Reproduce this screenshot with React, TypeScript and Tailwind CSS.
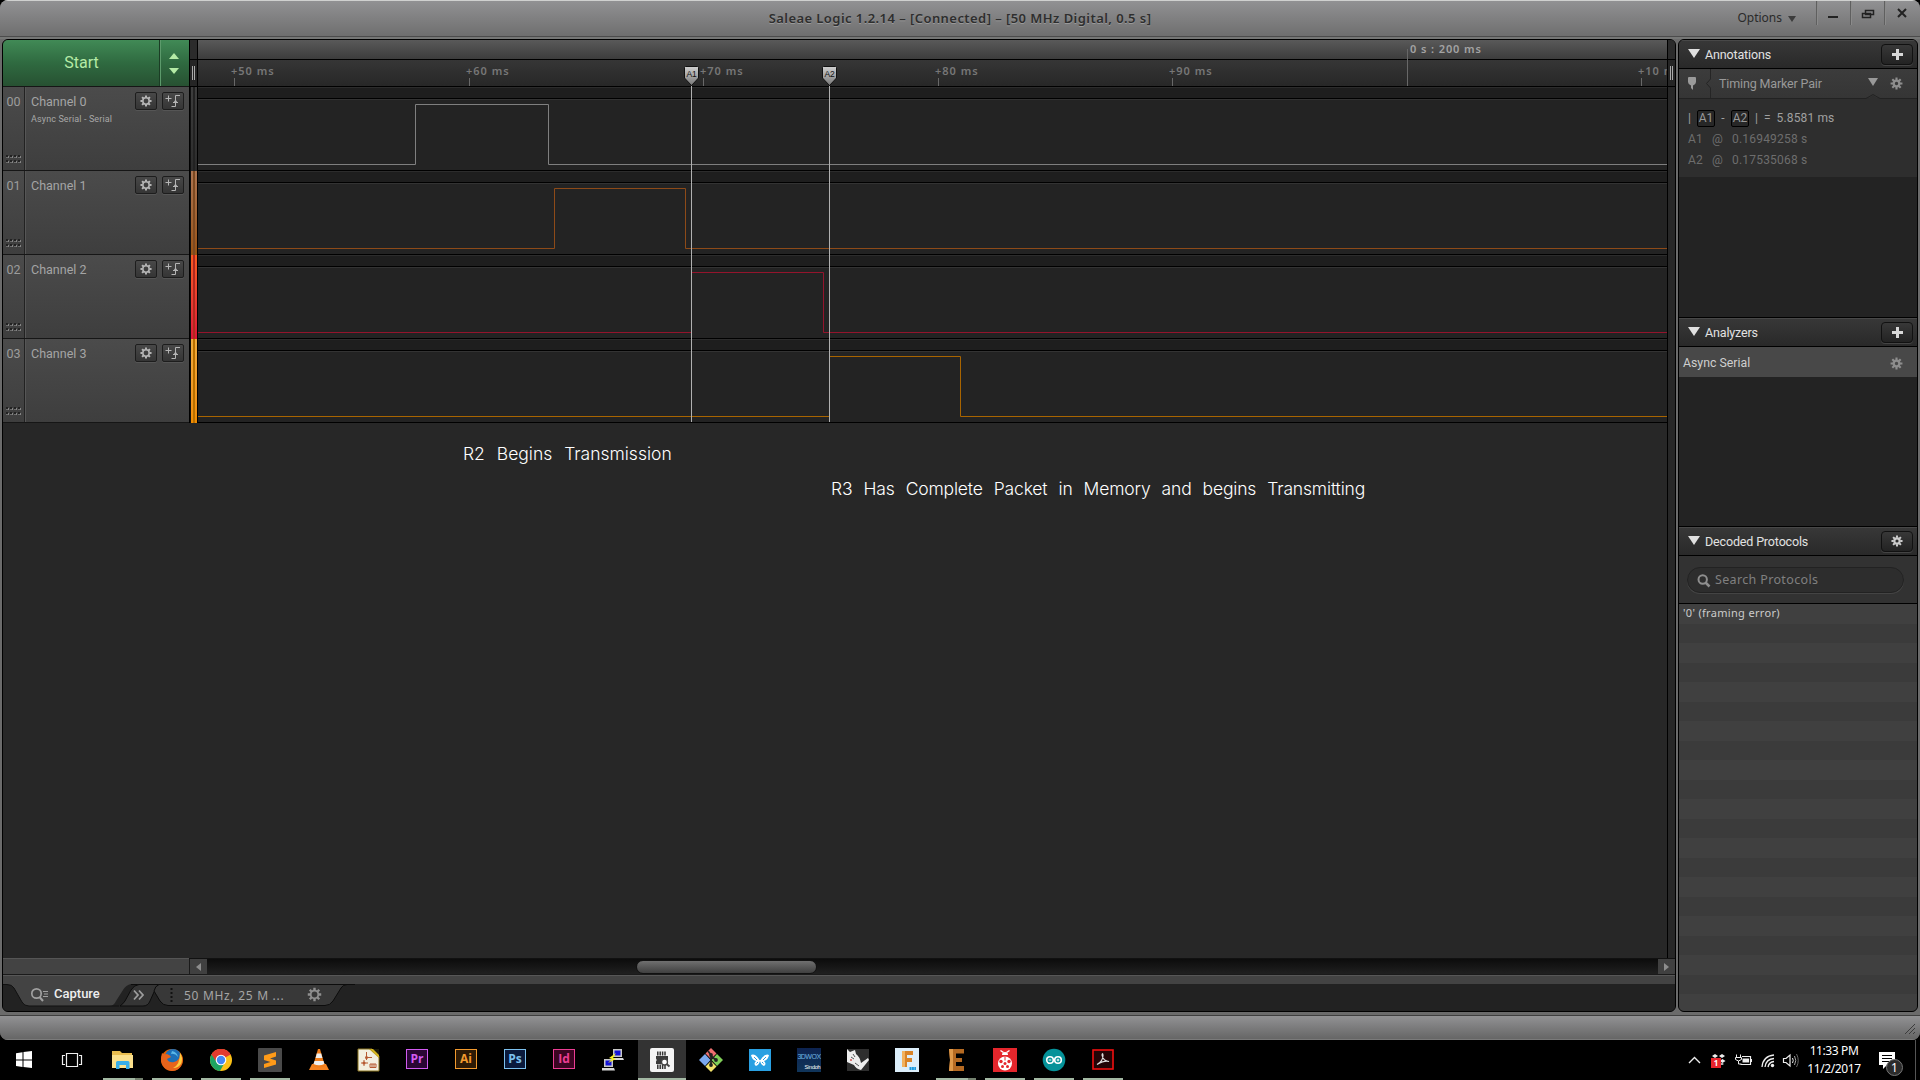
import React from "react";

const GEAR =
  "M12 2.5v4M12 17.5v4M2.5 12h4M17.5 12h4M5.3 5.3l2.8 2.8M15.9 15.9l2.8 2.8M5.3 18.7l2.8-2.8M15.9 8.1l2.8-2.8";

function Gear({ size = 16, color = "#b5b5b5", r = 5.4, w = 2.6 }: { size?: number; color?: string; r?: number; w?: number }) {
  return (
    <svg width={size} height={size} viewBox="0 0 24 24" fill="none" stroke={color} className="shrink-0">
      <circle cx="12" cy="12" r={r} strokeWidth={w} />
      <path d={GEAR} strokeWidth="3.4" />
    </svg>
  );
}

function Triangle({ className, points, w, h, color }: { className?: string; points: string; w: number; h: number; color: string }) {
  return (
    <svg width={w} height={h} viewBox={`0 0 ${w} ${h}`} className={`shrink-0 ${className ?? ""}`}>
      <polygon points={points} fill={color} />
    </svg>
  );
}

/* ---------- title bar ---------- */

function TitleBar() {
  return (
    <header className="relative flex h-[39px] shrink-0 items-start justify-end border-t border-[#cfd0cf] bg-linear-to-b from-[#919193] to-[#6c6c6c] pr-[2px]">
      <div className="absolute inset-x-0 bottom-0 h-[3px] border-t border-[#4c4c4c] bg-[#767776]" />
      <div className="absolute inset-x-0 top-[7px] text-center font-['Noto_Sans'] text-[13px] leading-[20px] font-semibold tracking-[0.44px] whitespace-pre text-[#2e2e2e] [text-shadow:0_1px_0_#9a9a9a]">
        Saleae Logic 1.2.14 – [Connected] – [50 MHz Digital, 0.5 s]
      </div>
      <div className="flex items-center gap-[6px] pt-[7px] pr-[20px] font-['Noto_Sans'] text-[12px] leading-[20px] text-[#2a2a2a]">
        Options
        <Triangle w={8} h={6} points="0,0 8,0 4,6" color="#3c3c3c" className="mt-[2px]" />
      </div>
      {[0, 1, 2].map((i) => (
        <div key={i} className="flex h-[24px] w-[34px] items-start justify-center border-l border-[#5f5f5f] pt-[6px] shadow-[inset_1px_0_0_#8b8b8b]">
          <svg width="14" height="14" viewBox="0 0 14 14" fill="none" stroke="#222">
            {i === 0 && <path d="M1 10h10" strokeWidth="2" />}
            {i === 1 && <path d="M4.5 3.5h8v4h-8zM1.5 6.5h8v4h-8z" strokeWidth="1.5" />}
            {i === 2 && <path d="M3 2l8 8M11 2l-8 8" strokeWidth="2" />}
          </svg>
        </div>
      ))}
    </header>
  );
}

/* ---------- channels ---------- */

type Channel = {
  id: string;
  name: string;
  sub?: string;
  strip: string;
  stripDark: string;
  wave: string;
  rise: number;
  fall: number;
};

const CHANNELS: Channel[] = [
  { id: "00", name: "Channel 0", sub: "Async Serial - Serial", strip: "bg-linear-to-b from-[#3e3e3e] to-[#2c2c2c]", stripDark: "bg-[#222]", wave: "#7f7f7f", rise: 415, fall: 548 },
  { id: "01", name: "Channel 1", strip: "bg-linear-to-b from-[#ad7550] to-[#9a5412]", stripDark: "bg-[#7d4a22]", wave: "#8d4a18", rise: 554, fall: 685 },
  { id: "02", name: "Channel 2", strip: "bg-linear-to-b from-[#fb5a20] to-[#dc1436]", stripDark: "bg-[#b02a20]", wave: "#94142c", rise: 691, fall: 823 },
  { id: "03", name: "Channel 3", strip: "bg-linear-to-b from-[#f0ab3c] to-[#f28c00]", stripDark: "bg-[#b97000]", wave: "#a86400", rise: 829, fall: 960 },
];

function Grip() {
  const dots = [];
  for (let x = 0; x < 4; x++) {
    dots.push(<rect key={`a${x}`} x={x * 4} y={0} width="2" height="2" fill="#222" />);
    dots.push(<rect key={`b${x}`} x={x * 4 + 2} y={1} width="1" height="2" fill="#858585" />);
    dots.push(<rect key={`c${x}`} x={x * 4} y={5} width="2" height="2" fill="#222" />);
    dots.push(<rect key={`d${x}`} x={x * 4 + 2} y={6} width="1" height="2" fill="#858585" />);
    dots.push(<rect key={`e${x}`} x={x * 4} y={2} width="2" height="1" fill="#6c6c6c" />);
    dots.push(<rect key={`f${x}`} x={x * 4} y={7} width="2" height="1" fill="#6c6c6c" />);
  }
  return (
    <svg width="16" height="8" viewBox="0 0 16 8">
      {dots}
    </svg>
  );
}

function SmallButton({ children }: { children: React.ReactNode }) {
  return (
    <div className="flex h-[18px] w-[22px] items-center justify-center rounded-[2px] border border-[#1d1d1d] bg-linear-to-b from-[#484848] to-[#353535] shadow-[0_1px_0_#555]">
      {children}
    </div>
  );
}

function ChannelHeader({ c }: { c: Channel }) {
  return (
    <div className="flex h-[84px] border-b border-[#161616] bg-linear-to-b from-[#4b4b4b] to-[#3e3e3e]">
      <div className="flex w-[22px] flex-col items-center justify-between border-r border-[#222] pt-[6px] pb-[7px] font-[Roboto] text-[12.5px] leading-[18px] text-[#9c9c9c]">
        <span>{c.id}</span>
        <Grip />
      </div>
      <div className="flex flex-1 justify-between border-l border-[#565656] pt-[5px] pr-[5px] pl-[5px] font-[Roboto]">
        <div className="flex flex-col">
          <span className="mt-px text-[12.5px] leading-[18px] text-[#a5a5a5]">{c.name}</span>
          {c.sub && <span className="text-[9px] leading-[16px] tracking-[0.12px] text-[#a8a8a8]">{c.sub}</span>}
        </div>
        <div className="flex gap-[5px]">
          <SmallButton>
            <Gear size={14} />
          </SmallButton>
          <SmallButton>
            <svg width="16" height="14" viewBox="0 0 16 14" fill="none" stroke="#b5b5b5">
              <path d="M0.500 4.500h6M3.500 1.500v6M15 1.500h-4.500v11M6.500 12.500h4M8 8.500h5" />
              <path d="M8.500 8.500h4l-2-3z" fill="#b5b5b5" stroke="none" />
            </svg>
          </SmallButton>
        </div>
      </div>
    </div>
  );
}

function Lane({ c }: { c: Channel }) {
  const r = c.rise - 198 + 0.5;
  const f = c.fall - 198 + 0.5;
  return (
    <div className="h-[84px] bg-[#232323]">
      <div className="h-[12px] border-t border-b border-t-[#2c2c2c] border-b-black bg-[#1e1e1e]" />
      <div className="h-px bg-[#333]" />
      <svg width="1469" height="70" viewBox="0 0 1469 70" fill="none" className="block">
        <path d={`M0 64.500H${r}V4.500H${f}V64.500H1469`} stroke={c.wave} />
      </svg>
      <div className="h-px bg-black" />
    </div>
  );
}

/* ---------- ruler ---------- */

const TICKS = [
  { x: 36, label: "+50 ms" },
  { x: 271, label: "+60 ms" },
  { x: 505, label: "+70 ms" },
  { x: 740, label: "+80 ms" },
  { x: 974, label: "+90 ms" },
  { x: 1443, label: "+10 ms" },
];

function Ruler() {
  return (
    <div className="relative h-[47px] shrink-0 overflow-hidden border-b border-black font-['Noto_Sans'] text-[11px] font-semibold tracking-[1px] whitespace-nowrap">
      <div className="h-[20px] border-b border-black bg-linear-to-b from-[#595959] to-[#3d3d3d]" />
      <div className="h-[26px] bg-linear-to-b from-[#363636] to-[#272727]" />
      <div className="absolute top-[9px] left-[1209px] h-[37px] border-l border-[#686868]" />
      <div className="absolute -top-px left-[1212px] leading-[19px] tracking-[0.9px] text-[#a3a3a3]">0 s : 200 ms</div>
      {TICKS.map((t) => (
        <div key={t.x} className="absolute top-[38px] h-[8px] border-l border-[#686868]" style={{ left: t.x }}>
          <div className="absolute -top-[16px] -left-[4px] leading-[18px] text-[#777]">{t.label}</div>
        </div>
      ))}
    </div>
  );
}

function Marker({ x, label }: { x: number; label: string }) {
  return (
    <div className="absolute top-[26px] flex w-[17px] flex-col items-center" style={{ left: x - 8 }}>
      <div className="relative h-[20px]">
        <svg width="17" height="20" viewBox="0 0 17 20" className="block">
          <defs>
            <linearGradient id="mk" x1="0" y1="0" x2="0" y2="1">
              <stop offset="0" stopColor="#d0d0d0" />
              <stop offset="1" stopColor="#777" />
            </linearGradient>
          </defs>
          <path d="M1.500 1.500Q1.500 .5 2.500 .5H14.500Q15.500 .5 15.500 1.500V12L8.500 19.500L1.500 12Z" fill="url(#mk)" stroke="#111" />
        </svg>
        <span className="absolute inset-x-0 top-[2px] text-center font-['Liberation_Sans'] text-[8.5px] leading-[12px] tracking-[-0.3px] text-[#111]">{label}</span>
      </div>
      <div className="h-[336px] w-px bg-[#b0b0b0]" />
    </div>
  );
}

/* ---------- bottom bar of capture panel ---------- */

function CaptureTabs() {
  return (
    <div className="relative h-[27px] shrink-0 bg-[#222]">
      <svg width="360" height="27" viewBox="0 0 360 27" className="block" fill="none">
        <path d="M128 .5H352" stroke="#0c0c0c" />
        <path d="M0 0H128Q123 1 120 6L113 17Q111 22 106 22H26Q21 22 19 18L11 4Q9 .5 4 .5H0Z" fill="#434343" />
        <path d="M0 .5H4Q9 .5 11 4L19 18Q21 22 26 22H116" stroke="#111" />
        <path d="M117 22Q120 20 122 17L128 6Q131 1 136 .5H156L151 8L147 17Q145 22 140 22Z" fill="#353535" stroke="#0c0c0c" />
        <path d="M156 .5Q152 2 151 7L157 17Q160 21.500 165 21.500H322Q327 21.500 330 17L338 4Q340 .5 344 .5Z" fill="#383838" stroke="#0c0c0c" />
        <circle cx="33.500" cy="9.500" r="4.700" stroke="#a0a0a0" strokeWidth="1.700" />
        <path d="M36.500 13L40 17" stroke="#a0a0a0" strokeWidth="2" />
        <path d="M40 7.500h5M41 10h4M40 12.500h5" stroke="#a0a0a0" />
        <path d="M131 6.500l4 4.500l-4 4.500M136 6.500l4 4.500l-4 4.500" stroke="#9c9c9c" strokeWidth="1.800" />
        <path d="M168.500 4v15" stroke="#111" strokeWidth="2" strokeDasharray="2 2" />
      </svg>
      <span className="absolute top-0 left-[51px] font-[Roboto] text-[13px] leading-[20px] font-medium text-[#eee]">Capture</span>
      <span className="absolute top-[2px] left-[181px] font-['Noto_Sans'] text-[12px] leading-[19px] tracking-[0.7px] whitespace-nowrap text-[#a5a5a5]">50 MHz, 25 M ...</span>
      <span className="absolute top-[2px] left-[303px]">
        <Gear size={17} color="#909090" />
      </span>
    </div>
  );
}

/* ---------- capture panel ---------- */

function Splitter() {
  return (
    <div className="flex h-[47px] flex-col border-b border-black bg-[#252525]">
      <div className="h-[20px] border-b border-black bg-[#2b2b2b]" />
      <div className="flex flex-1 items-center justify-center gap-px pb-px">
        <span className="h-[14px] w-px bg-[#aaa]" />
        <span className="h-[14px] w-px bg-[#aaa]" />
      </div>
    </div>
  );
}

function CapturePanel() {
  return (
    <section className="flex h-[973px] w-[1674px] flex-col overflow-hidden rounded-md border border-black bg-[#272727]">
      <div className="flex min-h-0 flex-1">
        <div className="flex w-[186px] flex-col">
          <div className="flex h-[47px] border-b border-[#161616] bg-linear-to-b from-[#418a56] via-[#2f6a40] to-[#275132] text-[#b4eba6]">
            <div className="flex flex-1 items-center justify-center border-r border-[#1b3d25] pb-px pl-px font-[Roboto] text-[16px]">Start</div>
            <div className="flex w-[29px] flex-col items-center justify-center gap-[9px] border-l border-[#5c9a6b] pr-[2px]">
              <Triangle w={10} h={6} points="5,0 10,6 0,6" color="#b4eba6" />
              <Triangle w={10} h={6} points="0,0 10,0 5,6" color="#b4eba6" />
            </div>
          </div>
          {CHANNELS.map((c) => (
            <ChannelHeader key={c.id} c={c} />
          ))}
          <div className="flex-1" />
          <div className="h-[16px] border-t border-[#555] bg-[#434343]" />
        </div>
        <div className="flex min-w-0 flex-1 flex-col">
          <div className="flex min-h-0 flex-1">
            <div className="flex w-[9px] flex-col">
              <div className="border-x border-black">
                <Splitter />
              </div>
              {CHANNELS.map((c) => (
                <div key={c.id} className="flex h-[84px] border-x border-black bg-[#111] pl-px">
                  <div className={`w-[2px] ${c.strip}`} />
                  <div className={`w-[2px] ${c.stripDark}`} />
                  <div className={`w-[2px] ${c.strip}`} />
                </div>
              ))}
            </div>
            <div className="relative w-[1469px]">
              <Ruler />
              {CHANNELS.map((c) => (
                <Lane key={c.id} c={c} />
              ))}
              <Marker x={493} label="A1" />
              <Marker x={631} label="A2" />
              <div className="absolute top-[402px] left-[265px] font-['Inter',sans-serif] text-[17.5px] leading-[24px] font-light [word-spacing:7px] whitespace-nowrap text-white">
                R2 Begins Transmission
              </div>
              <div className="absolute top-[437px] left-[633px] font-['Inter',sans-serif] text-[17.5px] leading-[24px] font-light tracking-[-0.16px] [word-spacing:6.3px] whitespace-nowrap text-white">
                R3 Has Complete Packet in Memory and begins Transmitting
              </div>
            </div>
            <div className="w-[8px] border-l border-black bg-[#272727]">
              <Splitter />
            </div>
          </div>
          <div className="flex h-[16px] border-t border-[#111] bg-linear-to-b from-[#0c0c0c] to-[#202020]">
            <div className="flex w-[18px] items-center justify-center border-l border-[#1a1a1a] bg-[#404040] pr-px">
              <Triangle w={5} h={8} points="5,0 5,8 0,4" color="#8d8d8d" />
            </div>
            <div className="flex flex-1 items-center pl-[429px]">
              <div className="h-[14px] w-[181px] rounded-full border border-[#111] bg-linear-to-b from-[#707070] to-[#404040]" />
            </div>
            <div className="flex w-[17px] items-center justify-center bg-[#404040]">
              <Triangle w={5} h={8} points="0,0 5,4 0,8" color="#8d8d8d" />
            </div>
          </div>
        </div>
      </div>
      <div className="h-[10px] shrink-0 border-t border-[#1a1a1a] bg-[#434343] shadow-[inset_0_1px_0_#575757]" />
      <CaptureTabs />
    </section>
  );
}

/* ---------- side panel ---------- */

function SectionHeader({ title, icon }: { title: string; icon: "plus" | "gear" }) {
  return (
    <div className="flex h-[29px] shrink-0 items-center border-b border-black bg-linear-to-b from-[#383838] to-[#292929] pr-[4px] pl-[9px] shadow-[inset_0_1px_0_#484848]">
      <Triangle w={12} h={9} points="0,0 12,0 6,9" color="#e0e0e0" className="-mt-px" />
      <span className="ml-[5px] flex-1 pt-px font-[Roboto] text-[12.500px] leading-[20px] tracking-[-0.15px] text-[#e2e2e2]">{title}</span>
      <div className="flex h-[21px] w-[32px] items-center justify-center rounded-[4px] border border-[#111] bg-linear-to-b from-[#383838] to-[#232323] shadow-[0_1px_0_#444]">
        {icon === "plus" ? (
          <svg width="11" height="11" viewBox="0 0 11 11" stroke="#d8d8d8" strokeWidth="3">
            <path d="M5.500 0v11M0 5.500h11" />
          </svg>
        ) : (
          <Gear size={14} color="#ccc" r={4.5} w={3.6} />
        )}
      </div>
    </div>
  );
}

function Key({ children }: { children: string }) {
  return <span className="flex h-[17px] w-[18px] items-center justify-center rounded-[2px] border border-black bg-[#272727] text-[#999]">{children}</span>;
}

function SidePanel() {
  return (
    <aside className="flex h-[973px] w-[240px] flex-col overflow-hidden rounded-md border border-black bg-[#232323] font-[Roboto] text-[12px]">
      <SectionHeader title="Annotations" icon="plus" />
      <div className="flex h-[29px] shrink-0 items-stretch bg-linear-to-b from-[#3c3c3c] to-[#353535]">
        <div className="flex w-[31px] items-center pl-[9px]">
          <svg width="8" height="13" viewBox="0 0 8 13">
            <path d="M0 1Q0 0 1 0H7Q8 0 8 1V5Q8 7 5 8.500V13L3 11V8.500Q0 7 0 5Z" fill="#9a9a9a" />
          </svg>
        </div>
        <svg width="8" height="29" viewBox="0 0 8 29" fill="none" stroke="#252525" className="-ml-[4px]">
          <path d="M4.500 0V10L.5 14.500L4.500 19V29" />
        </svg>
        <span className="ml-[5px] flex-1 text-[12.5px] leading-[29px] tracking-[-0.15px] text-[#999]">Timing Marker Pair</span>
        <div className="flex items-center gap-[11px] pr-[13px]">
          <Triangle w={10} h={8} points="0,0 10,0 5,8" color="#999" className="-mt-[3px]" />
          <Gear size={15} color="#8e8e8e" r={4.5} w={3.6} />
        </div>
      </div>
      <div className="flex h-[79px] shrink-0 flex-col bg-[#2e2e2e] pl-[9px]">
        <svg width="238" height="5" viewBox="0 0 238 5" fill="none" className="-mt-[4px] -ml-[9px] block shrink-0">
          <path d="M0 4.500H187L194 .5L201 4.500H238" stroke="#222" />
          <path d="M188 5L194 1.500L200 5Z" fill="#2e2e2e" />
        </svg>
        <div className="mt-[10px] flex h-[18px] items-center text-[12px] text-[#a0a0a0]">
          <span className="w-[9px]">|</span>
          <Key>A1</Key>
          <span className="w-[16px] text-center">-</span>
          <Key>A2</Key>
          <span className="ml-[6px]">|</span>
          <span className="ml-[6px]">=</span>
          <span className="ml-[6px] text-[12px] tracking-[0.15px]">5.8581 ms</span>
        </div>
        <div className="mt-[3px] flex h-[18px] items-center text-[12px] tracking-[0.2px] text-[#6d6d6d]">
          <span className="w-[24px]">A1</span>
          <span className="w-[20px]">@</span>0.16949258 s
        </div>
        <div className="mt-[3px] flex h-[18px] items-center text-[12px] tracking-[0.2px] text-[#6d6d6d]">
          <span className="w-[24px]">A2</span>
          <span className="w-[20px]">@</span>0.17535068 s
        </div>
      </div>
      <div className="h-[141px] shrink-0 border-b border-black" />
      <SectionHeader title="Analyzers" icon="plus" />
      <div className="flex h-[30px] shrink-0 items-center justify-between bg-[#484848] pt-[3px] pr-[13px] pl-[4px] text-[12.3px] text-[#cfcfcf]">
        Async Serial
        <Gear size={15} color="#8e8e8e" r={4.5} w={3.6} />
      </div>
      <div className="h-[150px] shrink-0 border-b border-black" />
      <SectionHeader title="Decoded Protocols" icon="gear" />
      <div className="flex h-[47px] shrink-0 items-center bg-[#323232] pr-[13px] pl-[8px]">
        <div className="flex h-[26px] flex-1 items-center rounded-full border border-[#222] bg-[#2d2d2d] pt-[2px] pl-[9px] font-['Noto_Sans'] text-[12.5px] tracking-[0.35px] text-[#808080] shadow-[0_1px_0_#444]">
          <svg width="14" height="14" viewBox="0 0 14 14" fill="none" stroke="#8e8e8e" className="mr-[4px]">
            <circle cx="5.700" cy="5.500" r="4.200" strokeWidth="2" />
            <path d="M8.500 8.500L12.500 12.500" strokeWidth="2.500" />
          </svg>
          Search Protocols
        </div>
      </div>
      <div className="flex-1 overflow-hidden border-t border-black">
        {Array.from({ length: 21 }, (_, i) => (
          <div key={i} className={`h-[19.5px] pl-[4px] font-['Noto_Sans'] text-[11px] leading-[17px] tracking-[0.32px] text-[#ccc] ${i % 2 ? "bg-[#3b3b3b]" : "bg-[#404040]"}`}>
            {i === 0 ? "'0' (framing error)" : ""}
          </div>
        ))}
      </div>
    </aside>
  );
}

/* ---------- taskbar ---------- */

function Adobe({ t, c, bg }: { t: string; c: string; bg: string }) {
  return (
    <span className="-mt-[3px] flex h-[20px] w-[22px] items-center justify-center border font-['Open_Sans'] text-[12px] leading-none font-bold" style={{ color: c, borderColor: c, background: bg }}>
      {t}
    </span>
  );
}

const svg = (children: React.ReactNode) => (
  <svg width="24" height="24" viewBox="0 0 24 24" fill="none">
    {children}
  </svg>
);

const ICONS: { run?: "one" | "stack" | "active"; el: React.ReactNode }[] = [
  { el: svg(<path d="M4 6.200L10.500 5.300V12.500H4ZM11.500 5.100L20 4V12.500H11.500ZM4 13.500H10.500V20L4 19.100ZM11.500 13.500H20V21L11.500 20Z" fill="#fff" />) },
  { el: svg(<path d="M6.500 5.500H17.500V18.500H6.500ZM5 7.500H2.500V16.500H5M19 7.500H21.500V16.500H19" stroke="#eee" strokeWidth="1.200" />) },
  {
    run: "stack",
    el: svg(
      <>
        <path d="M1 3H9L11 5H21V20H1Z" fill="#e9bd4f" />
        <path d="M1 7H22V20H1Z" fill="#fbe08c" />
        <path d="M5 21V14.500Q5 13 6.500 13H17Q18.500 13 18.500 14.500V21H15V17H8.500V21Z" fill="#38aee8" />
      </>,
    ),
  },
  {
    run: "one",
    el: svg(
      <>
        <circle cx="12" cy="12" r="11" fill="#e66000" />
        <circle cx="13" cy="9" r="8" fill="#1c6fb8" />
        <path d="M12 3Q17 4 18 9Q15 5 11 6Z" fill="#5bb8e8" />
        <path d="M2 5Q4 7 7 6Q10 7 11 9L7 11Q9 15 14 14Q20 13 20 5Q24 10 22 16Q19 23 12 23Q3 22 1 13Q1 8 2 5Z" fill="#e8641b" />
        <path d="M20 5Q23 9 21.500 15Q19 20 13 20Q20 17 20 5Z" fill="#ffcb3d" />
      </>,
    ),
  },
  {
    run: "one",
    el: svg(
      <>
        <circle cx="12" cy="12" r="11" fill="#fbc116" />
        <path d="M12 12L2.500 6.500A11 11 0 0 1 21.500 6.500Z" fill="#e33b2e" />
        <path d="M12 12L2.500 6.500A11 11 0 0 0 11 23L16 14Z" fill="#1da462" />
        <path d="M12 7H21.800A11 11 0 0 0 2.500 6.500L7.500 14Z" fill="#e33b2e" />
        <circle cx="12" cy="12" r="5.300" fill="#fff" />
        <circle cx="12" cy="12" r="4.200" fill="#4587f3" />
      </>,
    ),
  },
  {
    run: "one",
    el: svg(
      <>
        <rect width="24" height="24" rx="1" fill="#4a4a4a" />
        <path d="M18 4V8.500L12 10.500L18 12.500V16.500L6 20V16L12.500 14L6 12V7.500Z" fill="#ff9b18" />
      </>,
    ),
  },
  {
    el: svg(
      <>
        <path d="M5 16H19L22 22H2Z" fill="#f58220" />
        <path d="M11 1H13L18 18Q12 21 6 18Z" fill="#f07c1a" />
        <path d="M9.800 5.500H14.200L15.400 10H8.600ZM7.500 13H16.500L17.500 16Q12 18.500 6.500 16Z" fill="#eee" />
      </>,
    ),
  },
  {
    el: svg(
      <>
        <path d="M2 1H16L23 8V23H2Z" fill="#f3efdf" stroke="#8a7420" />
        <path d="M13 1H23V10Z" fill="#b79a1a" />
        <path d="M16 1H23V8Z" fill="#1a1a0a" />
        <path d="M14.500 1H17L23 7V9.500Z" fill="#d9b820" />
        <path d="M10.500 4V12M10.500 9.500H16M5 15H12M8 12V18M14 16H20V19.500H14ZM16 16V19.500M18 16V19.500" stroke="#b65a32" strokeWidth="1" />
        <circle cx="10.500" cy="9.500" r="1.500" fill="#b65a32" />
        <circle cx="8" cy="15" r="1.500" fill="#b65a32" />
      </>,
    ),
  },
  { el: <Adobe t="Pr" c="#d15bf0" bg="#2a0634" /> },
  { el: <Adobe t="Ai" c="#f29a2e" bg="#2d1a05" /> },
  { el: <Adobe t="Ps" c="#7cc0ee" bg="#0a1a3c" /> },
  { el: <Adobe t="Id" c="#ea3d93" bg="#3b0522" /> },
  {
    el: svg(
      <>
        <path d="M12 1H21V9H12ZM3 11H12V19H3Z" fill="#c8c8c8" />
        <path d="M13.500 2.500H19.500V7.500H13.500ZM4.500 12.500H10.500V17.500H4.500Z" fill="#1414d8" />
        <path d="M12 10H22L23 12H13ZM1 20H13L14 22.500H1Z" fill="#d8d8d8" />
        <path d="M15 5L8 10L11 11L7 15L15 11L12 10Z" fill="#f5f020" />
      </>,
    ),
  },
  {
    run: "active",
    el: svg(
      <>
        <rect width="24" height="24" rx="2" fill="#f4f4f4" />
        <path d="M7.800 3.500v4M10.200 3.500v4M12.600 3.500v4M15 3.500v4M7.800 16.500v4.500M10.200 16.500v4.500M12.600 16.500v4.500M15 16.500v4.500" stroke="#333" strokeWidth="1.500" />
        <path d="M6 8H18V16H6V13.500Q7.500 12 6 10.500Z" fill="#3a3a3a" />
        <circle cx="14.500" cy="14" r="3" fill="#fff" stroke="#444" strokeWidth="1.300" />
        <path d="M16.500 16L19.500 18.500" stroke="#444" strokeWidth="2" />
      </>,
    ),
  },
  {
    el: svg(
      <>
        <path d="M12 0L17.500 5.500L12 11L6.500 5.500Z" fill="#f07070" />
        <path d="M6 6L11.500 12L6 18L0 12Z" fill="#7ba8ee" />
        <path d="M18 6L24 12L18 18L12.500 12Z" fill="#80cf58" />
        <path d="M12 13L17.500 18.500L12 24L6.500 18.500Z" fill="#f2e26a" />
        <path d="M9 3L12 7V17M12 8L17 12" stroke="#222" strokeWidth="1.800" />
        <circle cx="12" cy="7" r="1.900" fill="#222" />
        <circle cx="12" cy="17" r="1.900" fill="#222" />
        <circle cx="17" cy="12" r="1.900" fill="#222" />
      </>,
    ),
  },
  {
    el: svg(
      <>
        <rect x="1" y="1" width="22" height="22" fill="#29a0e2" />
        <path d="M11.500 12Q7 5 3 7Q4 12 8 13Q5 16 8 18Q11 17 12 13Q13 17 16 18Q19 16 16 13Q20 12 21 7Q17 5 12.500 12Z" fill="#fff" />
        <path d="M6 9l3 3M18 9l-3 3M8.500 15.500l1.500-1.500M15.500 15.500l-1.500-1.500" stroke="#29a0e2" />
      </>,
    ),
  },
  {
    el: (
      <span className="flex h-[24px] w-[24px] flex-col items-center overflow-hidden bg-linear-to-b from-[#0d2350] to-[#10355a] pt-[5px] font-['Liberation_Sans'] text-[7px] leading-[8px] tracking-[-0.5px] text-[#6fb4e0]">
        3DWOX
        <span className="mt-[3px] pl-[7px] text-[5.5px] leading-[6px] tracking-[-0.2px] text-white">Sindoh</span>
      </span>
    ),
  },
  {
    el: svg(
      <>
        <rect x="1" y="1" width="22" height="22" fill="#2e2e2e" />
        <path d="M1 1L4 4L9 2L10 6Q14 9 15 15L22 10L23 12L15 22Q10 21 8 17L1 14Z" fill="#ededed" />
        <path d="M5 9l3 2M9 15l4 3M7 6l2 3" stroke="#555" />
        <circle cx="5" cy="12" r="1" fill="#c55" />
      </>,
    ),
  },
  {
    el: svg(
      <>
        <rect width="24" height="24" fill="#dceefa" />
        <path d="M7 3H18V7H12V10H17V14H12V19H7Z" fill="#d98327" />
        <path d="M7 3H10V19H7Z" fill="#f2b25e" />
        <path d="M14.500 20.500H21" stroke="#1b9be0" strokeWidth="3" strokeDasharray="2 .4" />
      </>,
    ),
  },
  {
    run: "stack",
    el: svg(
      <>
        <path d="M5 1H20V5.500H12V10H18V14H12V18H20V23H5L6 12Z" fill="#b56a22" />
        <path d="M5 1H9V23H5L6 12Z" fill="#e09a4a" />
      </>,
    ),
  },
  {
    run: "one",
    el: svg(
      <>
        <rect width="24" height="24" fill="#e5262c" />
        <path d="M7.500 2.500L10.500 4.500M16.500 2.500L13.500 4.500" stroke="#fff" strokeWidth="1.400" />
        <path d="M9 7Q9 4 12 4Q15 4 15 7Z" fill="#fff" />
        <circle cx="12" cy="15.500" r="7" fill="#fff" />
        <path d="M12 8.500v4" stroke="#e5262c" />
        <circle cx="8" cy="13.500" r="1.700" fill="#e5262c" />
        <circle cx="16" cy="13.500" r="1.700" fill="#e5262c" />
        <circle cx="12" cy="15.500" r="1.500" fill="#e5262c" />
        <circle cx="9.500" cy="18.500" r="1.500" fill="#e5262c" />
        <circle cx="14.500" cy="18.500" r="1.500" fill="#e5262c" />
      </>,
    ),
  },
  {
    run: "one",
    el: svg(
      <>
        <circle cx="12" cy="12" r="11.300" fill="#059299" />
        <circle cx="8" cy="12" r="3.300" stroke="#fff" strokeWidth="1.600" />
        <circle cx="16" cy="12" r="3.300" stroke="#fff" strokeWidth="1.600" />
        <path d="M6.700 12h2.600M14.700 12h2.600M16 10.700v2.600" stroke="#fff" />
      </>,
    ),
  },
  {
    run: "one",
    el: svg(
      <>
        <rect x="2" y="2" width="20" height="19" fill="#220406" stroke="#f01010" strokeWidth="1.600" />
        <path d="M6 16.500Q12 13.500 12 7Q11.500 4 11 7Q12 13 18 13.500Q14 12 6 16.500" stroke="#ddd" strokeWidth="1.200" />
      </>,
    ),
  },
];

function Taskbar() {
  return (
    <footer className="flex h-[40px] shrink-0 justify-between bg-black">
      <div className="flex">
        {ICONS.map((ic, i) => (
          <div key={i} className={`flex h-[40px] w-[48px] flex-col items-center ${i === 2 ? "ml-[3px]" : i > 2 ? "ml-px" : ""} ${ic.run === "active" ? "bg-[#333]" : ""}`}>
            <div className={`flex h-[38px] items-center ${i === 0 ? "" : "pt-[2px]"}`}>{ic.el}</div>
            {ic.run === "active" && <div className="h-[2px] w-full bg-[#a3b8a3]" />}
            {ic.run === "one" && <div className="h-[2px] w-[40px] bg-[#a3b8a3]" />}
            {ic.run === "stack" && <div className="h-[2px] w-[40px] border-r-[8px] border-[#74826f] bg-[#a3b8a3]" />}
          </div>
        ))}
      </div>
      <div className="flex items-center text-white">
        <div className="relative -mr-[3px] h-[40px] w-[116px]">
          <svg width="116" height="40" viewBox="0 0 116 40" fill="none" stroke="#eee">
            <path d="M6 23L11.500 17.500L17 23" strokeWidth="1.400" />
            <path d="M32 14l3 2l-3 2l-3-2zM39 14l3 2l-3 2l-3-2zM39.500 19l3 2l-3 2l-3-2zM37 24l2-1l2 1l-2 1z" fill="#eee" stroke="none" />
            <rect x="28" y="18" width="10" height="10" fill="#e8242c" stroke="none" />
            <path d="M53.500 14.500v3M57.500 14.500v3M52.500 17.500h6v2q-3 3-6 0zM55.500 21v3h3" />
            <path d="M59 16.500H67.500V24.500H57.500" strokeWidth="1.200" />
            <path d="M59.500 18.500H66V22.500H59.500Z" fill="#eee" stroke="none" />
            <path d="M68.500 19v3" />
            <path d="M79 27Q80 16 91 15M82 27Q83 19 91 18.500M85 27Q86 22 91 21.500" strokeWidth="1.300" />
            <circle cx="89.500" cy="25.500" r="1.700" fill="#eee" stroke="none" />
            <path d="M100.500 18.500H103L107 15V26L103 22.500H100.500Z" strokeWidth="1.200" />
            <path d="M109.500 18Q111 20.500 109.500 23" />
            <path d="M111.500 16Q114 20.500 111.500 25" stroke="#aaa" />
            <path d="M113.500 14Q117 20.500 113.500 27" stroke="#666" />
          </svg>
          <span className="absolute top-[18px] left-[28px] w-[10px] text-center font-['Noto_Sans'] text-[8px] leading-[10px] font-bold">1</span>
        </div>
        <div className="w-[76px] text-center font-['Noto_Sans'] text-[12px] leading-[18px] tracking-[-0.4px]">
          11:33 PM
          <br />
          11/2/2017
        </div>
        <div className="relative h-[40px] w-[43px]">
          <svg width="43" height="40" viewBox="0 0 43 40">
            <path d="M7 12H23V25H15L11 29V25H7Z" fill="#fff" />
            <path d="M10 15.500H20M10 18.500H20M10 21.500H17" stroke="#000" />
            <circle cx="22.500" cy="27.500" r="8" fill="#2b2b2b" stroke="#777" />
          </svg>
          <span className="absolute top-[19px] left-[15px] w-[15px] text-center font-['Noto_Sans'] text-[12px] leading-[17px]">1</span>
        </div>
        <div className="h-full w-[5px] border-l border-[#555]" />
      </div>
    </footer>
  );
}

export default function App() {
  return (
    <div className="flex h-[1080px] w-[1920px] flex-col overflow-hidden bg-black">
      <div className="flex h-[1040px] shrink-0 flex-col overflow-hidden rounded-lg bg-[#6b6b6b]">
        <TitleBar />
        <div className="flex h-[973px] shrink-0 gap-[2px] pl-[2px]">
          <CapturePanel />
          <SidePanel />
        </div>
        <div className="h-[3px] shrink-0" />
        <div className="relative flex-1 border-t border-b border-t-[#3f3f3f] border-b-[#7a7a7a] bg-linear-to-b from-[#929294] to-[#666]">
          <svg width="12" height="12" viewBox="0 0 12 12" className="absolute right-[4px] bottom-[4px]" stroke="#3c3c3c" fill="none">
            <path d="M1 11L11 1M5 11L11 5M9 11L11 9" />
          </svg>
        </div>
      </div>
      <Taskbar />
    </div>
  );
}
